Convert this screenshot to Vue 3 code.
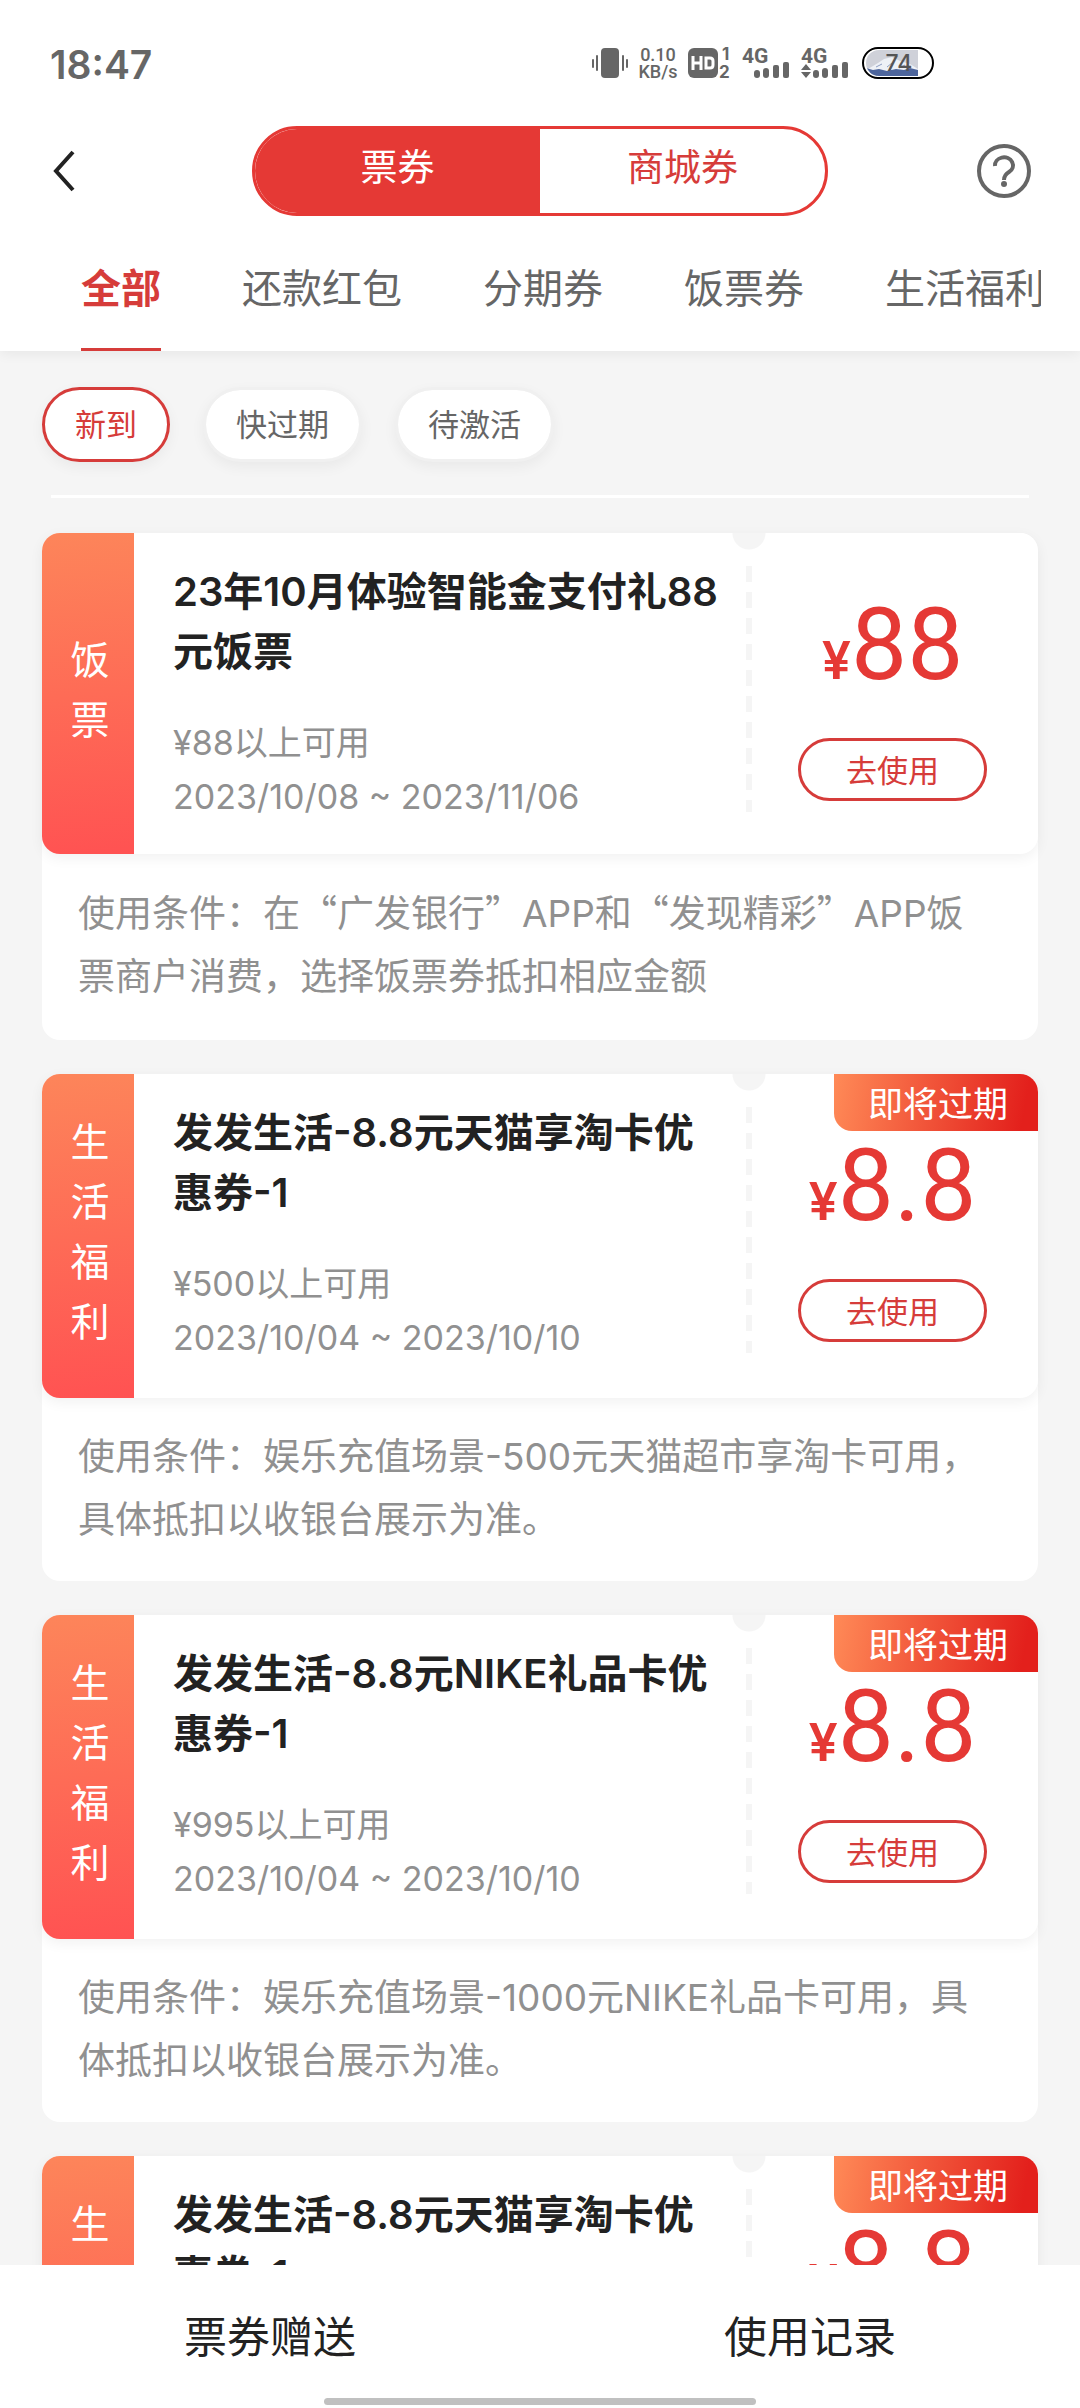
<script setup>
import { ref } from 'vue'

const kind = ref('票券')
const tabs = ['全部', '还款红包', '分期券', '饭票券', '生活福利']
const activeTab = ref('全部')
const filters = ['新到', '快过期', '待激活']
const activeFilter = ref('新到')

const coupons = [
  {
    tag: '饭票',
    title: '23年10月体验智能金支付礼88元饭票',
    limit: '¥88以上可用',
    period: '2023/10/08 ~ 2023/11/06',
    price: '88',
    expiring: false,
    terms: '使用条件：在“广发银行”APP和“发现精彩”APP饭票商户消费，选择饭票券抵扣相应金额',
  },
  {
    tag: '生活福利',
    title: '发发生活-8.8元天猫享淘卡优惠券-1',
    limit: '¥500以上可用',
    period: '2023/10/04 ~ 2023/10/10',
    price: '8.8',
    expiring: true,
    terms: '使用条件：娱乐充值场景-500元天猫超市享淘卡可用，具体抵扣以收银台展示为准。',
  },
  {
    tag: '生活福利',
    title: '发发生活-8.8元NIKE礼品卡优惠券-1',
    limit: '¥995以上可用',
    period: '2023/10/04 ~ 2023/10/10',
    price: '8.8',
    expiring: true,
    terms: '使用条件：娱乐充值场景-1000元NIKE礼品卡可用，具体抵扣以收银台展示为准。',
  },
  {
    tag: '生活福利',
    title: '发发生活-8.8元天猫享淘卡优惠券-1',
    limit: '¥500以上可用',
    period: '2023/10/04 ~ 2023/10/10',
    price: '8.8',
    expiring: true,
    terms: '使用条件：娱乐充值场景-500元天猫超市享淘卡可用，具体抵扣以收银台展示为准。',
  },
]

// Curly quotes are set full-width, so they are split out of the running text.
const pieces = (text) => text.split(/([“”])/).filter(Boolean)
const isQuote = (piece) => piece === '“' || piece === '”'
</script>

<template>
  <div class="app">
    <header class="top">
      <div class="status">
        <span class="clock">18:47</span>
        <div class="indicators">
          <svg class="vibrate" width="36" height="32" viewBox="0 0 36 32" fill="#666">
            <rect x="9" y="1" width="18" height="30" rx="4" />
            <rect x="0" y="12" width="2" height="9" rx="1" />
            <rect x="4" y="8" width="2" height="16" rx="1" />
            <rect x="30" y="8" width="2" height="16" rx="1" />
            <rect x="34" y="12" width="2" height="9" rx="1" />
          </svg>
          <div class="speed"><span>0.10</span><span>KB/s</span></div>
          <svg class="hd" width="42" height="32" viewBox="0 0 42 32" fill="#666">
            <rect x="0" y="1" width="30" height="30" rx="6" />
            <path d="M5 9v14M13 9v14M5 16h8M18 11h4q3 0 3 3v4q0 3-3 3h-4z" fill="none" stroke="#fff" stroke-width="3" />
            <text x="34" y="13" class="sim">1</text>
            <text x="31" y="31" class="sim">2</text>
          </svg>
          <svg class="signal" width="47" height="32" viewBox="0 0 47 32" fill="#666">
            <text x="0" y="16" class="net">4G</text>
            <rect x="12" y="23" width="6" height="8" rx="3" />
            <rect x="21" y="21" width="6" height="10" rx="3" />
            <rect x="31" y="18" width="6" height="13" rx="2" />
            <rect x="41" y="15" width="6" height="16" rx="2" />
          </svg>
          <svg class="signal" width="47" height="32" viewBox="0 0 47 32" fill="#666">
            <text x="0" y="16" class="net">4G</text>
            <path d="M5 17l5 6H0zM5 31l5-6H0z" />
            <rect x="12" y="23" width="6" height="8" rx="3" />
            <rect x="21" y="21" width="6" height="10" rx="3" />
            <rect x="31" y="18" width="6" height="13" rx="2" />
            <rect x="41" y="15" width="6" height="16" rx="2" />
          </svg>
          <svg class="battery" width="72" height="32" viewBox="0 0 72 32">
            <defs>
              <clipPath id="charge"><path d="M17 3h39v26H17a13 13 0 0 1 0-26z" /></clipPath>
            </defs>
            <g clip-path="url(#charge)">
              <rect width="60" height="32" fill="#cfd1d9" />
              <path d="M6 22l10-6 6-4 8-2 8 4 10 3 8 5v4H6z" fill="#eef1f6" />
              <path d="M4 21l7 2 6-1 8 2 9-2 8 1 6-2 8 2v9H4z" fill="#4d659c" />
              <path d="M14 20l6-3M25 20l5-4M37 21l6-3" stroke="#8d9dc2" stroke-width="1" />
            </g>
            <rect x="1" y="1" width="70" height="30" rx="15" fill="none" stroke="#000" stroke-width="2" />
            <text x="37" y="24" text-anchor="middle" class="level">74</text>
          </svg>
        </div>
      </div>

      <div class="nav">
        <button class="icon-btn" aria-label="返回">
          <svg width="28" height="42" viewBox="0 0 28 42" fill="none" stroke="#222" stroke-width="4">
            <path d="M25 2L8 21l17 19" />
          </svg>
        </button>
        <div class="switch">
          <button :class="{ on: kind === '票券' }" @click="kind = '票券'">票券</button>
          <button :class="{ on: kind === '商城券' }" @click="kind = '商城券'">商城券</button>
        </div>
        <button class="icon-btn" aria-label="帮助">
          <svg width="56" height="56" viewBox="0 0 56 56" fill="none" stroke="#666" stroke-width="4">
            <circle cx="28" cy="28" r="25" />
            <path d="M19 23a9 8 0 1 1 14 6q-5 3-5 8" />
            <circle cx="28" cy="41" r="3" fill="#666" stroke="none" />
          </svg>
        </button>
      </div>

      <nav class="tabs">
        <button v-for="tab in tabs" :key="tab" :class="{ on: tab === activeTab }" @click="activeTab = tab">{{ tab }}</button>
      </nav>
    </header>

    <main class="content">
      <div class="filters">
        <button v-for="name in filters" :key="name" :class="{ on: name === activeFilter }" @click="activeFilter = name">{{ name }}</button>
      </div>
      <hr class="rule" />

      <article v-for="(c, i) in coupons" :key="i" class="card">
        <div class="front">
          <div class="tag"><span v-for="ch in c.tag" :key="ch">{{ ch }}</span></div>
          <div class="info">
            <h2>{{ c.title }}</h2>
            <p>{{ c.limit }}</p>
            <p>{{ c.period }}</p>
          </div>
          <div class="tear"></div>
          <div class="offer">
            <div class="price"><small>¥</small>{{ c.price }}</div>
            <button class="use">去使用</button>
          </div>
          <span v-if="c.expiring" class="badge">即将过期</span>
        </div>
        <div class="terms">
          <p><template v-for="(p, k) in pieces(c.terms)" :key="k"><span v-if="isQuote(p)" class="quote">{{ p }}</span><template v-else>{{ p }}</template></template></p>
        </div>
      </article>
    </main>

    <footer class="bottom">
      <div class="actions">
        <button>票券赠送</button>
        <button>使用记录</button>
      </div>
      <div class="home"></div>
    </footer>
  </div>
</template>

<style>
body {
  margin: 0;
}
</style>

<style scoped>
.app {
  height: 100vh;
  display: flex;
  flex-direction: column;
  overflow: hidden;
  background: #f5f5f5;
  color: #222;
  font-family: Inter, "Noto Sans CJK SC", sans-serif;
}
button {
  margin: 0;
  padding: 0;
  border: 0;
  background: none;
  color: inherit;
  font: inherit;
  white-space: nowrap;
  cursor: pointer;
}
svg {
  display: block;
  overflow: visible;
}
h2,
p {
  margin: 0;
  font-size: inherit;
}

/* Header */
.top {
  position: relative;
  flex: none;
  background: #fff;
  box-shadow: 0 3px 12px rgba(0, 0, 0, 0.06);
}
.status {
  display: flex;
  align-items: center;
  justify-content: space-between;
  height: 126px;
  padding: 0 146px 0 50px;
  color: #666;
}
.clock {
  padding-top: 3px;
  font-size: 39px;
  font-weight: 600;
}
.indicators {
  display: flex;
  align-items: center;
}
.speed {
  display: flex;
  flex-direction: column;
  width: 40px;
  margin: 0 10px;
  font: 500 18px/17px Roboto, sans-serif;
  text-align: center;
}
.signal {
  margin-left: 12px;
}
.battery {
  margin-left: 14px;
}
.sim {
  font: 700 17px Inter, sans-serif;
}
.net {
  font: 700 21px Roboto, sans-serif;
}
.level {
  font: 500 23px Inter, sans-serif;
  fill: #555;
}
.nav {
  display: flex;
  align-items: center;
  justify-content: space-between;
  height: 90px;
  padding: 0 48px;
}
.icon-btn {
  width: 56px;
}
.switch {
  display: flex;
  width: 576px;
  height: 90px;
  box-sizing: border-box;
  border: 3px solid #e53935;
  border-radius: 45px;
  overflow: hidden;
}
.switch button {
  flex: 1;
  padding-bottom: 12px;
  color: #d63c3a;
  font-size: 37px;
}
.switch .on {
  background: #e53935;
  color: #fff;
}
.tabs {
  display: flex;
  gap: 81px;
  height: 135px;
  margin: 0 39px;
  padding-left: 42px;
  overflow: hidden;
}
.tabs button {
  box-sizing: border-box;
  flex: none;
  padding-top: 8px;
  border-bottom: 3px solid transparent;
  color: #666;
  font-size: 40px;
}
.tabs .on {
  border-bottom-color: #d63c3a;
  color: #d63c3a;
  font-weight: 700;
}

/* Filters */
.content {
  flex: 1;
  min-height: 0;
  overflow: hidden;
  padding: 36px 42px 0;
}
.filters {
  display: flex;
  gap: 33px;
}
.filters button {
  height: 75px;
  box-sizing: border-box;
  padding: 0 30px 5px;
  border: 3px solid #f0f0f0;
  border-radius: 38px;
  background: #fff;
  background-clip: padding-box;
  box-shadow: 0 5px 14px rgba(0, 0, 0, 0.05);
  color: #666;
  font-size: 31px;
}
.filters .on {
  border-color: #d63c3a;
  color: #d63c3a;
}
.rule {
  height: 3px;
  margin: 33px 9px 35px;
  border: 0;
  background: #fff;
}

/* Coupon */
.card {
  display: flex;
  flex-direction: column;
  min-height: 507px;
  margin-bottom: 34px;
  border-radius: 18px;
  background: #fff;
}
.front {
  position: relative;
  display: flex;
  min-height: 321px;
  border-radius: 18px;
  background: #fff;
  box-shadow: 0 4px 14px rgba(0, 0, 0, 0.06);
}
.tag {
  display: flex;
  flex-direction: column;
  align-items: center;
  justify-content: center;
  box-sizing: border-box;
  width: 92px;
  padding: 38px 0 46px 4px;
  border-radius: 18px 0 0 18px;
  background: linear-gradient(175deg, #fd855a, #ff5252);
  color: #fff;
  font-size: 39px;
  line-height: 60px;
}
.info {
  flex: 1;
  padding: 29px 0 0 39px;
}
.info h2 {
  margin-bottom: 34px;
  font-size: 40px;
  font-weight: 600;
  line-height: 60px;
}
.info p {
  color: #909090;
  font-size: 34px;
  line-height: 54px;
}
.tear {
  width: 34px;
  background:
    radial-gradient(circle at 50% 0, #f5f5f5 16px, transparent 17px) top / 34px 18px no-repeat,
    repeating-linear-gradient(#f5f5f5 0 16px, transparent 16px 26px) 50% 33px / 6px 246px no-repeat;
}
.offer {
  display: flex;
  flex-direction: column;
  align-items: center;
  width: 189px;
  padding: 67px 51px 0 32px;
}
.price {
  color: #e53935;
  font-family: Roboto, sans-serif;
  font-size: 100px;
  line-height: 90px;
  white-space: nowrap;
}
.price small {
  font-family: Inter, sans-serif;
  font-size: 52px;
  font-weight: 600;
  line-height: 1;
}
.use {
  width: 189px;
  height: 63px;
  margin-top: 48px;
  padding-bottom: 3px;
  border: 3px solid #d63c3a;
  border-radius: 32px;
  color: #d63c3a;
  font-size: 31px;
}
.badge {
  position: absolute;
  top: 0;
  right: 0;
  box-sizing: border-box;
  width: 204px;
  padding: 3px 0 0 4px;
  border-radius: 0 18px 0 18px;
  background: linear-gradient(100deg, #ff8a57, #e3201c 92%);
  color: #fff;
  font-size: 35px;
  line-height: 54px;
  text-align: center;
}
.terms {
  display: flex;
  flex: 1;
  align-items: center;
  padding: 0 42px 4px 36px;
  color: #909090;
  font-size: 37px;
  line-height: 63px;
}
.quote {
  font-family: "Noto Sans CJK SC", sans-serif;
  line-height: 1;
}

/* Bottom bar */
.bottom {
  position: relative;
  flex: none;
  background: #fff;
}
.actions {
  display: flex;
  height: 133px;
}
.actions button {
  flex: 1;
  padding-top: 5px;
  font-size: 43px;
}
.home {
  width: 40%;
  height: 7px;
  margin: 0 auto 3px;
  border-radius: 4px;
  background: #c0c0c0;
}
</style>
